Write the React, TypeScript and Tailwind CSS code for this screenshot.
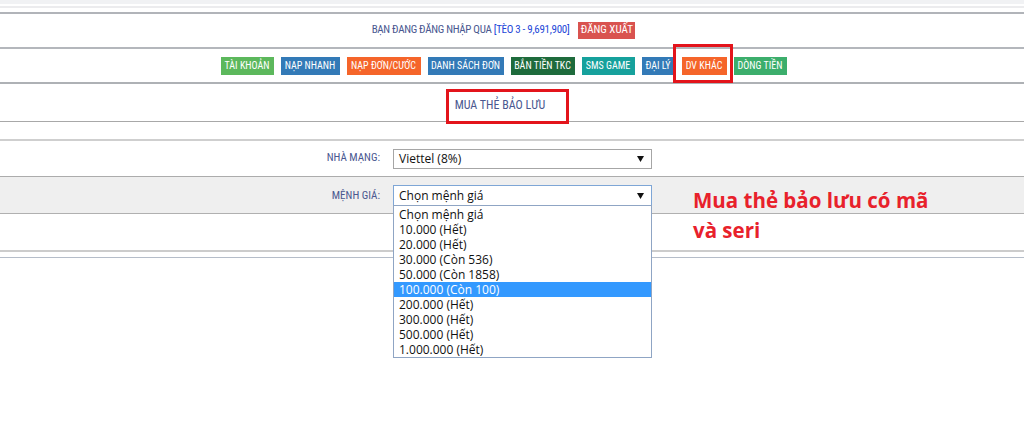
import React from "react";

const nav: { label: string; bg: string; w: string }[] = [
  { label: "TÀI KHOẢN", bg: "bg-[#5cb85c]", w: "w-[53px]" },
  { label: "NẠP NHANH", bg: "bg-[#337ab7]", w: "w-[59px]" },
  { label: "NẠP ĐƠN/CƯỚC", bg: "bg-[#f5652a]", w: "w-[74px]" },
  { label: "DANH SÁCH ĐƠN", bg: "bg-[#337ab7]", w: "w-[76px]" },
  { label: "BẮN TIỀN TKC", bg: "bg-[#1e6b3c]", w: "w-[64px]" },
  { label: "SMS GAME", bg: "bg-[#16a19c]", w: "w-[53px]" },
  { label: "ĐẠI LÝ", bg: "bg-[#337ab7]", w: "w-[33px]" },
  { label: "DV KHÁC", bg: "bg-[#f5652a]", w: "w-[45px]" },
  { label: "DÒNG TIỀN", bg: "bg-[#3cae6c]", w: "w-[53px]" },
];

const options = [
  "Chọn mệnh giá",
  "10.000 (Hết)",
  "20.000 (Hết)",
  "30.000 (Còn 536)",
  "50.000 (Còn 1858)",
  "100.000 (Còn 100)",
  "200.000 (Hết)",
  "300.000 (Hết)",
  "500.000 (Hết)",
  "1.000.000 (Hết)",
];

function Arrow() {
  return (
    <svg width="7" height="6" viewBox="0 0 7 6" className="shrink-0">
      <path d="M0 0 L7 0 L3.5 6 Z" fill="#111" />
    </svg>
  );
}

export default function App() {
  const cond =
    "font-['Roboto_Condensed','Liberation_Sans_Narrow','DejaVu_Sans_Condensed',Roboto,sans-serif] [font-stretch:condensed]";
  return (
    <div className="relative h-[435px] w-[1024px] overflow-hidden bg-white">
      <div className="h-[4px] bg-[#f1f2f4]" />
      <div className="h-[2px]" />
      <div className="h-[2px] bg-[#ececee]" />
      <div className="h-[4px]" />
      <div className="h-[2px] bg-[#b1b4b9]" />

      {/* header */}
      <div className="w-[1007px] h-[33px] flex items-center justify-center gap-[9px]">
        <span className={`${cond} text-[11px] tracking-[-0.3px] text-[#4a5890]`}>
          BẠN ĐANG ĐĂNG NHẬP QUA <span className="text-[#2447d8]">[TÈO 3 - 9,691,900]</span>
        </span>
        <span
          className={`${cond} h-[17px] w-[57px] flex items-center justify-center bg-[#d9534f] text-[11px] text-white`}
        >
          ĐĂNG XUẤT
        </span>
      </div>
      <div className="h-[2px] bg-[#b4b7bc]" />

      {/* nav */}
      <div className="w-[1007px] h-[33px] flex items-center justify-center gap-[7px]">
        {nav.map((n) => (
          <span
            key={n.label}
            className={`${cond} ${n.bg} ${n.w} h-[18px] flex items-center justify-center text-[10px] text-white whitespace-nowrap`}
          >
            {n.label}
          </span>
        ))}
      </div>
      <div className="h-[2px] bg-[#aeb1b5]" />

      {/* title */}
      <div className="w-[1007px] h-[37px] flex items-center justify-center pt-[5px]">
        <span className={`${cond} text-[12px] text-[#4a5890] mr-[7px]`}>MUA THẺ BẢO LƯU</span>
      </div>
      <div className="h-[1px] bg-[#a8a8a8]" />
      <div className="h-[17px]" />
      <div className="h-[2px] bg-[#cfcfcf]" />

      {/* row 1 */}
      <div className="h-[35px] flex items-center">
        <div className={`${cond} w-[380px] text-right text-[11px] text-[#4a5890]`}>NHÀ MẠNG:</div>
        <div className="ml-[13px] w-[259px] h-[20px] border border-[#a6a6a6] bg-white flex items-center justify-between pl-[5px] pr-[7px] font-['Open_Sans',sans-serif] text-[12px] text-[#111]">
          <span>Viettel (8%)</span>
          <Arrow />
        </div>
      </div>
      <div className="h-[1px] bg-[#acacac]" />

      {/* row 2 */}
      <div className="h-[36px] bg-[#efefef] flex items-start pt-[8px]">
        <div className={`${cond} w-[380px] text-right text-[11px] text-[#4a5890] pt-[3px]`}>MỆNH GIÁ:</div>
        <div className="ml-[13px] w-[259px] h-[21px] border border-[#7ea6d6] bg-white flex items-center justify-between pl-[5px] pr-[7px] font-['Open_Sans',sans-serif] text-[12px] text-[#111]">
          <span>Chọn mệnh giá</span>
          <Arrow />
        </div>
      </div>
      <div className="h-[1px] bg-[#b0b0b0]" />
      <div className="h-[36px]" />
      <div className="h-[2px] bg-[#cccccc]" />
      <div className="h-[5px]" />
      <div className="h-[1px] bg-[#b5bdc9]" />

      {/* dropdown list overlay */}
      <div className="absolute left-[393px] top-[205px] w-[259px] h-[153px] border border-[#8fa5c4] bg-white py-[1px] font-['Open_Sans',sans-serif] text-[12px] text-[#111]">
        {options.map((o, i) => (
          <div
            key={o}
            className={`h-[15px] leading-[15px] pl-[5px] ${i === 5 ? "bg-[#3399ff] text-white" : ""}`}
          >
            {o}
          </div>
        ))}
      </div>

      {/* annotation */}
      <div className="absolute left-[693px] top-[185px] font-['Open_Sans',sans-serif] font-bold text-[20.5px] leading-[30px] text-[#e8212b]">
        Mua thẻ bảo lưu có mã
        <br />
        và seri
      </div>

      {/* red highlight boxes */}
      <div className="absolute left-[673px] top-[44px] w-[60px] h-[39px] border-[3px] border-[#e3141b]" />
      <div className="absolute left-[446px] top-[89px] w-[123px] h-[35px] border-[3px] border-[#e3141b]" />
    </div>
  );
}
